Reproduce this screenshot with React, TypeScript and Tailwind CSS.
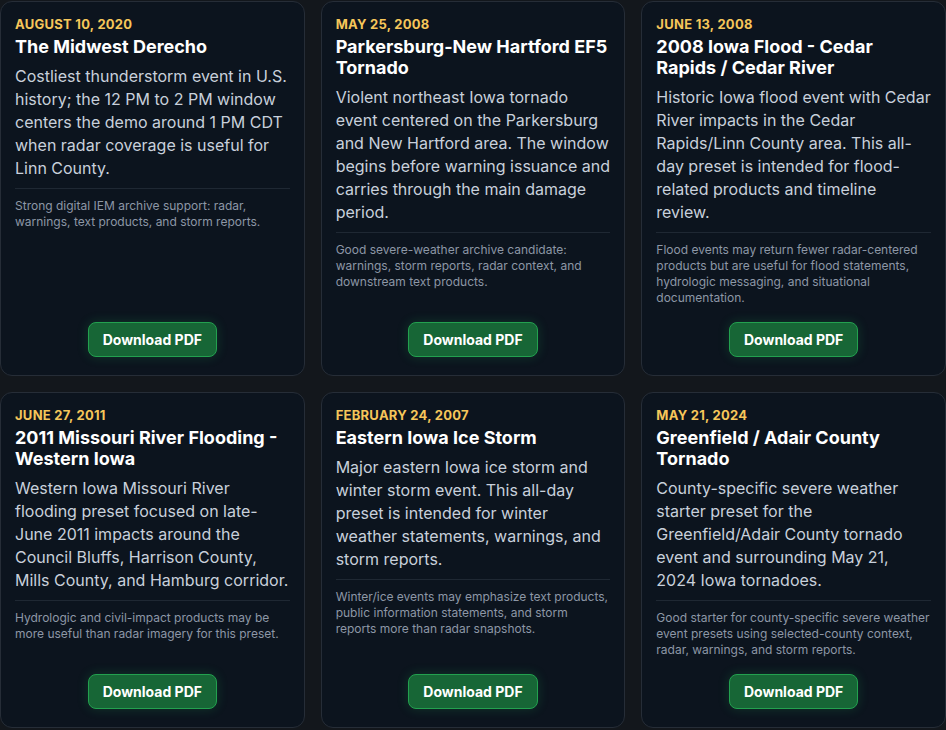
import React from "react";

interface EventPreset {
  date: string;
  title: string;
  description: string;
  note: string;
}

const presets: EventPreset[] = [
  {
    date: "August 10, 2020",
    title: "The Midwest Derecho",
    description:
      "Costliest thunderstorm event in U.S. history; the 12 PM to 2 PM window centers the demo around 1 PM CDT when radar coverage is useful for Linn County.",
    note: "Strong digital IEM archive support: radar, warnings, text products, and storm reports.",
  },
  {
    date: "May 25, 2008",
    title: "Parkersburg-New Hartford EF5 Tornado",
    description:
      "Violent northeast Iowa tornado event centered on the Parkersburg and New Hartford area. The window begins before warning issuance and carries through the main damage period.",
    note: "Good severe-weather archive candidate: warnings, storm reports, radar context, and downstream text products.",
  },
  {
    date: "June 13, 2008",
    title: "2008 Iowa Flood - Cedar Rapids / Cedar River",
    description:
      "Historic Iowa flood event with Cedar River impacts in the Cedar Rapids/Linn County area. This all-day preset is intended for flood-related products and timeline review.",
    note: "Flood events may return fewer radar-centered products but are useful for flood statements, hydrologic messaging, and situational documentation.",
  },
  {
    date: "June 27, 2011",
    title: "2011 Missouri River Flooding - Western Iowa",
    description:
      "Western Iowa Missouri River flooding preset focused on late-June 2011 impacts around the Council Bluffs, Harrison County, Mills County, and Hamburg corridor.",
    note: "Hydrologic and civil-impact products may be more useful than radar imagery for this preset.",
  },
  {
    date: "February 24, 2007",
    title: "Eastern Iowa Ice Storm",
    description:
      "Major eastern Iowa ice storm and winter storm event. This all-day preset is intended for winter weather statements, warnings, and storm reports.",
    note: "Winter/ice events may emphasize text products, public information statements, and storm reports more than radar snapshots.",
  },
  {
    date: "May 21, 2024",
    title: "Greenfield / Adair County Tornado",
    description:
      "County-specific severe weather starter preset for the Greenfield/Adair County tornado event and surrounding May 21, 2024 Iowa tornadoes.",
    note: "Good starter for county-specific severe weather event presets using selected-county context, radar, warnings, and storm reports.",
  },
];

const PresetCard: React.FC<{ preset: EventPreset }> = ({ preset }) => {
  return (
    <div className="flex flex-col rounded-xl border border-[#262d37] bg-[#0c141e] px-3.5 pt-3.5 pb-[18px]">
      <div className="text-[13px] leading-4 font-bold uppercase tracking-[0.02em] text-[#f6c65a] mb-1">
        {preset.date}
      </div>
      <h3 className="text-[18px] leading-[21px] font-bold text-white">{preset.title}</h3>
      <p className="mt-2 text-[16px] leading-[23px] text-[#c8d0db]">{preset.description}</p>
      <p className="mt-2 border-t border-[#1f2833] pt-[9px] text-[12px] leading-4 text-[#8d97a6]">
        {preset.note}
      </p>
      <div className="mt-auto flex justify-center pt-4">
        <button
          type="button"
          className="h-[35px] rounded-lg border border-[#23a14f] bg-[#176636] px-3.5 text-[14px] font-bold text-white shadow-[0_0_12px_rgba(34,197,94,0.2)]"
        >
          Download PDF
        </button>
      </div>
    </div>
  );
};

export default function App() {
  return (
    <div
      className="min-h-screen bg-[#13171c] pt-px"
      style={{ fontFamily: "Inter, 'Noto Sans', sans-serif" }}
    >
      <div className="grid grid-cols-3 gap-4">
        {presets.map((p) => (
          <PresetCard key={p.title} preset={p} />
        ))}
      </div>
    </div>
  );
}
